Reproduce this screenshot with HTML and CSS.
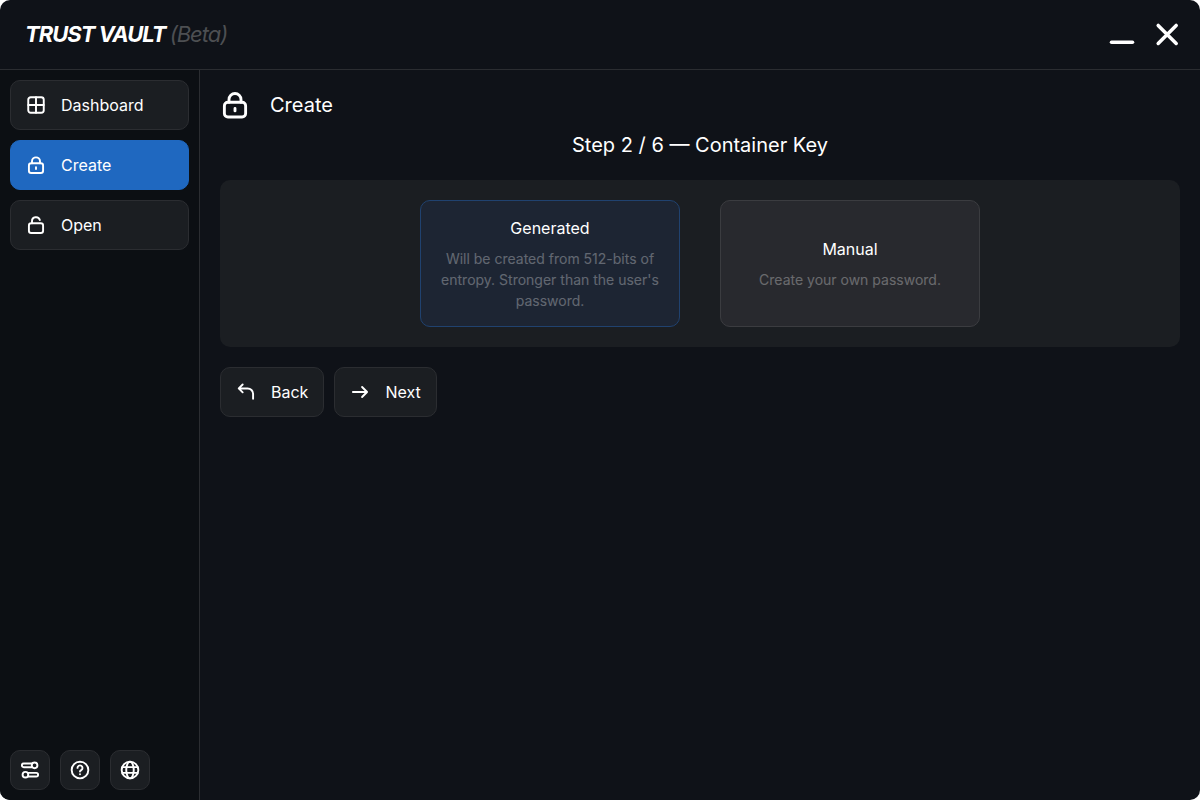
FILE: index.html
```
<!DOCTYPE html>
<html lang="en">
<head>
    <meta charset="UTF-8">
    <meta name="viewport" content="width=device-width, initial-scale=1.0">
    <title>Trust Vault</title>
    <link rel="stylesheet" href="styles.css">
</head>
<body>
    <!-- Shared icons -->
    <svg class="icon-defs" aria-hidden="true">
        <symbol id="icon-lock" viewBox="0 0 24 24">
            <rect x="3.5" y="9.8" width="17" height="11.8" rx="2.8"/>
            <path d="M7.2 9.8V7.6a4.8 4.8 0 0 1 9.6 0v2.2M12 14.7v2"/>
        </symbol>
    </svg>

    <div class="window">
        <!-- Title bar -->
        <header class="titlebar">
            <h1 class="title">TRUST VAULT <span class="beta">(Beta)</span></h1>
            <div class="window-controls">
                <button class="control-btn" aria-label="Minimize">
                    <svg viewBox="0 0 30 30"><path d="M4.5 23.2h21"/></svg>
                </button>
                <button class="control-btn" aria-label="Close">
                    <svg viewBox="0 0 30 30"><path d="M6.2 6.4l18 18M24.2 6.4l-18 18"/></svg>
                </button>
            </div>
        </header>

        <div class="layout">
            <!-- Sidebar -->
            <aside class="sidebar">
                <nav class="menu">
                    <button class="btn">
                        <svg class="icon" viewBox="0 0 24 24"><rect x="2.7" y="2.7" width="18.6" height="18.6" rx="3"/><path d="M12 2.7v18.6M2.7 12h18.6"/></svg>
                        Dashboard
                    </button>
                    <button class="btn active">
                        <svg class="icon"><use href="#icon-lock"/></svg>
                        Create
                    </button>
                    <button class="btn">
                        <svg class="icon" viewBox="0 0 24 24"><rect x="3.5" y="9.8" width="17" height="11.8" rx="2.8"/><path d="M7.2 9.8V7.6a4.8 4.8 0 0 1 9.4-1.5"/></svg>
                        Open
                    </button>
                </nav>
                <div class="tools">
                    <button class="tool-btn" aria-label="Settings">
                        <svg class="icon" viewBox="0 0 24 24"><path d="M14 4.2H4.5a2.2 2.2 0 0 0 0 4.4H14M10 15.4h9.5a2.2 2.2 0 0 1 0 4.4H10"/><circle cx="17.5" cy="6.4" r="3.4"/><circle cx="6.5" cy="17.6" r="3.4"/></svg>
                    </button>
                    <button class="tool-btn" aria-label="Help">
                        <svg class="icon" viewBox="0 0 24 24"><circle cx="12" cy="12" r="10"/><path d="M9 9.5a3 3 0 1 1 4.5 2.6c-1 .6-1.500 1-1.500 1.700M12 17v.2"/></svg>
                    </button>
                    <button class="tool-btn" aria-label="Language">
                        <svg class="icon" viewBox="0 0 24 24"><circle cx="12" cy="12" r="10"/><ellipse cx="12" cy="12" rx="4.5" ry="10"/><path d="M3 8.5h18M3 15.5h18"/></svg>
                    </button>
                </div>
            </aside>

            <!-- Create container -->
            <main class="content">
                <div class="page-head">
                    <svg class="icon"><use href="#icon-lock"/></svg>
                    <h2>Create</h2>
                </div>
                <h3 class="step">Step 2 / 6 — Container Key</h3>

                <div class="options">
                    <button class="option selected">
                        <span class="option-name">Generated</span>
                        <span class="option-text">Will be created from 512-bits of entropy. Stronger than the user's password.</span>
                    </button>
                    <button class="option">
                        <span class="option-name">Manual</span>
                        <span class="option-text">Create your own password.</span>
                    </button>
                </div>

                <div class="actions">
                    <button class="btn">
                        <svg class="icon" viewBox="0 0 24 24"><path d="M8 3L3.300 7.700l4.700 4.700M3.300 7.700H14a6.500 6.500 0 0 1 6.500 6.500V20"/></svg>
                        Back
                    </button>
                    <button class="btn">
                        <svg class="icon" viewBox="0 0 24 24"><path d="M3.500 12h17M14.500 6l6 6-6 6"/></svg>
                        Next
                    </button>
                </div>
            </main>
        </div>
    </div>
</body>
</html>
```
FILE: styles.css
```
:root {
    --main-bg: #0f1218;
    --side-bg: #0c0f13;
    --panel-bg: #1b1e22;
    --line: #2b2d31;
    --accent: #1f68c0;
}

* {
    box-sizing: border-box;
}

body {
    margin: 0;
    background: #fff;
    color: #fff;
    font-family: Inter, sans-serif;
    font-size: 16px;
}

h1, h2, h3 {
    margin: 0;
    font-weight: 400;
}

button {
    font: inherit;
    color: inherit;
    cursor: pointer;
}

svg {
    fill: none;
    stroke: currentColor;
    stroke-width: 2.3;
    stroke-linecap: round;
    stroke-linejoin: round;
}

.icon-defs {
    display: none;
}

.icon {
    width: 20px;
    height: 20px;
    flex-shrink: 0;
}

.window {
    display: flex;
    flex-direction: column;
    min-height: 100vh;
    background: var(--main-bg);
    border-radius: 10px;
    overflow: hidden;
}

/* Title bar */
.titlebar {
    display: flex;
    align-items: center;
    justify-content: space-between;
    height: 70px;
    padding: 0 18px 1px 25px;
    border-bottom: 1px solid var(--line);
}

.title {
    font-size: 22px;
    line-height: 28px;
    font-weight: 700;
    font-style: italic;
    letter-spacing: -1px;
}

.beta {
    font-weight: 400;
    color: #4d4f52;
}

.window-controls {
    display: flex;
    gap: 15px;
}

.control-btn {
    display: flex;
    padding: 0;
    border: 0;
    background: none;
}

.control-btn svg {
    width: 30px;
    height: 30px;
    stroke-width: 3.5;
}

/* Sidebar */
.layout {
    display: flex;
    flex: 1;
}

.sidebar {
    display: flex;
    flex-direction: column;
    justify-content: space-between;
    width: 200px;
    padding: 10px;
    background: var(--side-bg);
    border-right: 1px solid var(--line);
}

.menu {
    display: flex;
    flex-direction: column;
    gap: 10px;
}

.btn {
    display: flex;
    align-items: center;
    gap: 15px;
    height: 50px;
    padding: 0 15px;
    background: var(--panel-bg);
    border: 1px solid var(--line);
    border-radius: 10px;
}

.btn.active {
    background: var(--accent);
    border-color: var(--accent);
}

.tools {
    display: flex;
    gap: 10px;
}

.tool-btn {
    display: flex;
    align-items: center;
    justify-content: center;
    width: 40px;
    height: 40px;
    padding: 0;
    background: var(--panel-bg);
    border: 1px solid var(--line);
    border-radius: 10px;
}

/* Content */
.content {
    flex: 1;
    padding: 20px;
}

.page-head {
    display: flex;
    align-items: center;
    gap: 20px;
}

.page-head .icon {
    width: 30px;
    height: 30px;
}

.page-head h2,
.step {
    font-size: 20px;
    line-height: 30px;
}

.step {
    margin: 10px 0 20px;
    text-align: center;
}

.options {
    display: flex;
    justify-content: center;
    gap: 40px;
    padding: 20px;
    background: var(--panel-bg);
    border-radius: 10px;
}

.option {
    display: flex;
    flex-direction: column;
    align-items: center;
    justify-content: center;
    gap: 8px;
    width: 260px;
    padding: 15px;
    background: #28292e;
    border: 1px solid #3b3c40;
    border-radius: 10px;
}

.option.selected {
    background: #1d2533;
    border-color: #20426f;
}

.option-name {
    line-height: 24px;
}

.option-text {
    font-size: 14px;
    line-height: 21px;
    color: #fff;
    opacity: 0.3;
}

.actions {
    display: flex;
    gap: 10px;
    margin-top: 20px;
}
```
